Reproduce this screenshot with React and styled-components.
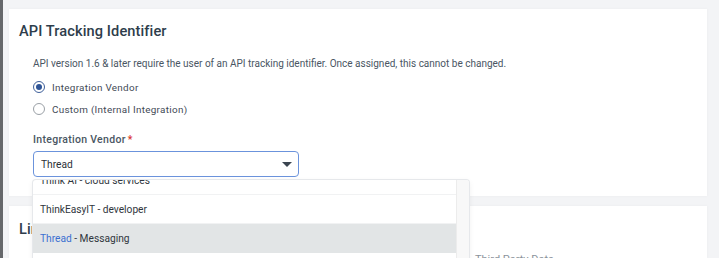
import React from 'react';
import styled, { createGlobalStyle } from 'styled-components';

const GlobalStyle = createGlobalStyle`
  html, body {
    margin: 0;
    padding: 0;
    background: #f3f4f6;
    font-family: Roboto, "Liberation Sans", sans-serif;
    overflow: hidden;
  }
`;

const Page = styled.div`
  width: 719px;
  height: 258px;
  box-sizing: border-box;
  border-left: 3px solid #66686b;
  padding: 9px 12px 0 6px;
  display: flex;
  flex-direction: column;
  gap: 10px;
  overflow: hidden;
`;

const Card = styled.section`
  position: relative;
  background: #ffffff;
  box-shadow: 0 0 3px rgba(0, 0, 0, 0.04);
  padding: ${p => p.$pad || '13px 10px 19px 10px'};
  flex-shrink: 0;
`;

const Heading = styled.h2`
  margin: 0;
  font-size: 14.6px;
  font-weight: 500;
  color: #2e3d4b;
  letter-spacing: 0.1px;
`;

const Body = styled.div`
  padding: 18px 0 0 14px;
  display: flex;
  flex-direction: column;
`;

const Note = styled.p`
  margin: 0 0 7px;
  font-size: 10px;
  color: #4a5663;
`;

const RadioRow = styled.label`
  display: flex;
  align-items: center;
  gap: 7px;
  height: 22px;
  font-size: 9.9px;
  color: #3f4a56;
  letter-spacing: 0.3px;
`;

const RadioDot = styled.span`
  width: 10px;
  height: 10px;
  border-radius: 50%;
  border: 1px solid ${p => (p.$on ? '#3e5f9a' : '#9aa0a6')};
  display: flex;
  align-items: center;
  justify-content: center;
  &::after {
    content: '';
    width: 6px;
    height: 6px;
    border-radius: 50%;
    background: ${p => (p.$on ? '#2f5597' : 'transparent')};
  }
`;

const FieldLabel = styled.div`
  margin-top: 13px;
  font-size: 10.5px;
  font-weight: 500;
  color: #4a5663;
  letter-spacing: 0.3px;
  span {
    color: #d9342b;
    margin-left: 2px;
  }
`;

const Field = styled.div`
  position: relative;
  margin-top: 5px;
`;

const Select = styled.div`
  width: 266px;
  height: 26px;
  box-sizing: border-box;
  border: 1px solid #6b93dc;
  border-radius: 4px;
  display: flex;
  align-items: center;
  justify-content: space-between;
  padding: 0 6px 0 7px;
  font-size: 10.2px;
  color: #2b3036;
`;

const Caret = styled.span`
  width: 0;
  height: 0;
  border-left: 5px solid transparent;
  border-right: 5px solid transparent;
  border-top: 5px solid #3b4450;
`;

const Menu = styled.div`
  position: absolute;
  top: 29px;
  left: 0;
  width: 436px;
  height: 120px;
  background: #ffffff;
  border-radius: 3px;
  box-shadow: 0 0 0 1px #e6e8eb, 0 2px 6px rgba(0, 0, 0, 0.08);
  display: flex;
  overflow: hidden;
  z-index: 2;
`;

const Options = styled.div`
  flex: 1;
  display: flex;
  flex-direction: column;
  margin-top: -14px;
`;

const Option = styled.div`
  height: 28px;
  flex-shrink: 0;
  display: flex;
  align-items: center;
  padding-left: 7px;
  font-size: 10.2px;
  color: #30363c;
  background: ${p => (p.$active ? '#e2e5e6' : 'transparent')};
  border-bottom: 1px solid ${p => (p.$active ? '#e2e5e6' : '#f1f2f3')};
  em {
    font-style: normal;
    color: #3b6fd1;
  }
`;

const Scrollbar = styled.div`
  width: 12px;
  background: #f8f8f8;
  border-left: 1px solid #ececec;
`;

const Faint = styled.div`
  position: absolute;
  left: 466px;
  top: 47px;
  font-size: 11px;
  color: #8a929b;
`;

export default function App() {
  return (
    <>
      <GlobalStyle />
      <Page>
        <Card>
          <Heading>API Tracking Identifier</Heading>
          <Body>
            <Note>
              API version 1.6 &amp; later require the user of an API tracking identifier. Once assigned, this cannot be changed.
            </Note>
            <RadioRow>
              <RadioDot $on />
              Integration Vendor
            </RadioRow>
            <RadioRow>
              <RadioDot />
              Custom (Internal Integration)
            </RadioRow>
            <FieldLabel>
              Integration Vendor<span>*</span>
            </FieldLabel>
            <Field>
              <Select>
                Thread
                <Caret />
              </Select>
              <Menu>
                <Options>
                  <Option>Think AI - cloud services</Option>
                  <Option>ThinkEasyIT - developer</Option>
                  <Option $active>
                    <em>Thread</em>&nbsp;- Messaging
                  </Option>
                  <Option>Thread Systems - IT</Option>
                </Options>
                <Scrollbar />
              </Menu>
            </Field>
          </Body>
        </Card>
        <Card $pad="14px 10px 20px 10px">
          <Heading>Linked Accounts</Heading>
          <Faint>Third Party Data</Faint>
        </Card>
      </Page>
    </>
  );
}
